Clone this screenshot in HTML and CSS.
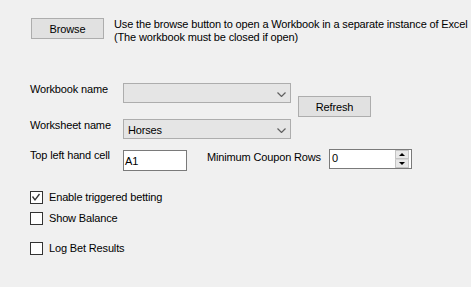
FILE: index.html
```html
<!DOCTYPE html>
<html>
<head>
	<meta charset="utf-8">
	<title>Workbook settings</title>
	<link rel="stylesheet" href="styles.css">
</head>
<body>
	<div class="panel">
		<div class="browse_row">
			<button type="button" class="btn browse">Browse</button>
			<p class="hint">Use the browse button to open a Workbook in a separate instance of Excel<br>(The workbook must be closed if open)</p>
		</div>

		<div class="row row_first">
			<label class="lbl">Workbook name</label>
			<div class="combo">
				<span class="combo_text"></span>
				<svg class="chev" width="9" height="5" viewBox="0 0 9 5"><polyline points="0.5,0.5 4.5,4.5 8.5,0.5" fill="none" stroke="#606060" stroke-width="1.2"/></svg>
			</div>
			<button type="button" class="btn refresh">Refresh</button>
		</div>

		<div class="row row_sheet">
			<label class="lbl">Worksheet name</label>
			<div class="combo">
				<span class="combo_text">Horses</span>
				<svg class="chev" width="9" height="5" viewBox="0 0 9 5"><polyline points="0.5,0.5 4.5,4.5 8.5,0.5" fill="none" stroke="#606060" stroke-width="1.2"/></svg>
			</div>
		</div>

		<div class="row row_cell">
			<label class="lbl">Top left hand cell</label>
			<div class="textbox">A1</div>
			<label class="lbl_min">Minimum Coupon Rows</label>
			<div class="numeric">
				<span class="num_text">0</span>
				<span class="spin">
					<span class="spin_btn"><span class="tri up"></span></span>
					<span class="spin_btn"><span class="tri down"></span></span>
				</span>
			</div>
		</div>

		<div class="checks">
			<label class="check">
				<span class="box"><svg width="11" height="11" viewBox="0 0 11 11"><polyline points="1.5,4.5 4,8 8.5,2" fill="none" stroke="#333" stroke-width="1.3"/></svg></span>Enable triggered betting
			</label>
			<label class="check"><span class="box"></span>Show Balance</label>
			<label class="check gap"><span class="box"></span>Log Bet Results</label>
		</div>
	</div>
</body>
</html>
```

FILE: styles.css
```css
body
{
	margin: 0;
	background: #f0f0f0;
	font-family: "Liberation Sans", Arial, sans-serif;
	font-size: 11px;
	letter-spacing: -0.15px;
	color: #000;
}
.panel
{
	padding: 18px 0 0 30px;
	height: 269px;
	overflow: hidden;
}
.btn
{
	font: inherit;
	letter-spacing: inherit;
	background: #e1e1e1;
	border: 1px solid #adadad;
	color: #000;
	padding: 0;
	height: 21px;
	width: 73px;
	flex-shrink: 0;
}
.browse_row
{
	display: flex;
	align-items: flex-start;
}
.browse
{
	margin-left: 1px;
}
.hint
{
	margin: 0 0 0 10px;
	line-height: 13px;
	white-space: nowrap;
}
.row
{
	display: flex;
	align-items: flex-start;
}
.row_first
{
	margin-top: 39px;
}
.row_sheet
{
	margin-top: 2px;
}
.row_cell
{
	margin-top: 10px;
}
.lbl
{
	width: 93px;
	flex-shrink: 0;
	line-height: 13px;
}
.combo
{
	box-sizing: border-box;
	width: 168px;
	height: 20px;
	flex-shrink: 0;
	background: #e5e5e5;
	border: 1px solid #adadad;
	display: flex;
	align-items: flex-start;
	justify-content: space-between;
	padding: 4px 0 0 4px;
}
.combo_text
{
	line-height: 13px;
}
.chev
{
	margin: 4px 4px 0 0;
}
.refresh
{
	margin: 13px 0 0 7px;
}
.textbox
{
	box-sizing: border-box;
	width: 64px;
	height: 21px;
	flex-shrink: 0;
	background: #fff;
	border: 1px solid #7a7a7a;
	padding: 4px 0 0 1px;
	line-height: 13px;
	margin-top: 1px;
}
.lbl_min
{
	margin-left: 20px;
	width: 122px;
	flex-shrink: 0;
	padding-top: 2px;
	line-height: 13px;
}
.numeric
{
	box-sizing: border-box;
	width: 83px;
	height: 20px;
	flex-shrink: 0;
	background: #fff;
	border: 1px solid #7a7a7a;
	display: flex;
	justify-content: space-between;
}
.num_text
{
	padding: 2px 0 0 2px;
	line-height: 13px;
}
.spin
{
	display: flex;
	flex-direction: column;
	width: 14px;
	margin: 0 2px 0 0;
}
.spin_btn
{
	height: 8px;
	background: #e8e8e8;
	border: 1px solid #c4c4c4;
	display: flex;
	align-items: center;
	justify-content: center;
}
.spin_btn + .spin_btn
{
	border-top-color: #d8d8d8;
}
.tri
{
	width: 0;
	height: 0;
	border-left: 3px solid transparent;
	border-right: 3px solid transparent;
}
.tri.up
{
	border-bottom: 3px solid #000;
}
.tri.down
{
	border-top: 3px solid #000;
}
.checks
{
	margin-top: 20px;
	display: flex;
	flex-direction: column;
}
.check
{
	display: flex;
	align-items: center;
	height: 13px;
	line-height: 13px;
	margin-bottom: 8px;
}
.check.gap
{
	margin-top: 9px;
}
.box
{
	box-sizing: border-box;
	width: 13px;
	height: 13px;
	flex-shrink: 0;
	border: 1px solid #333;
	background: #fff;
	margin-right: 6px;
	display: flex;
}
```
